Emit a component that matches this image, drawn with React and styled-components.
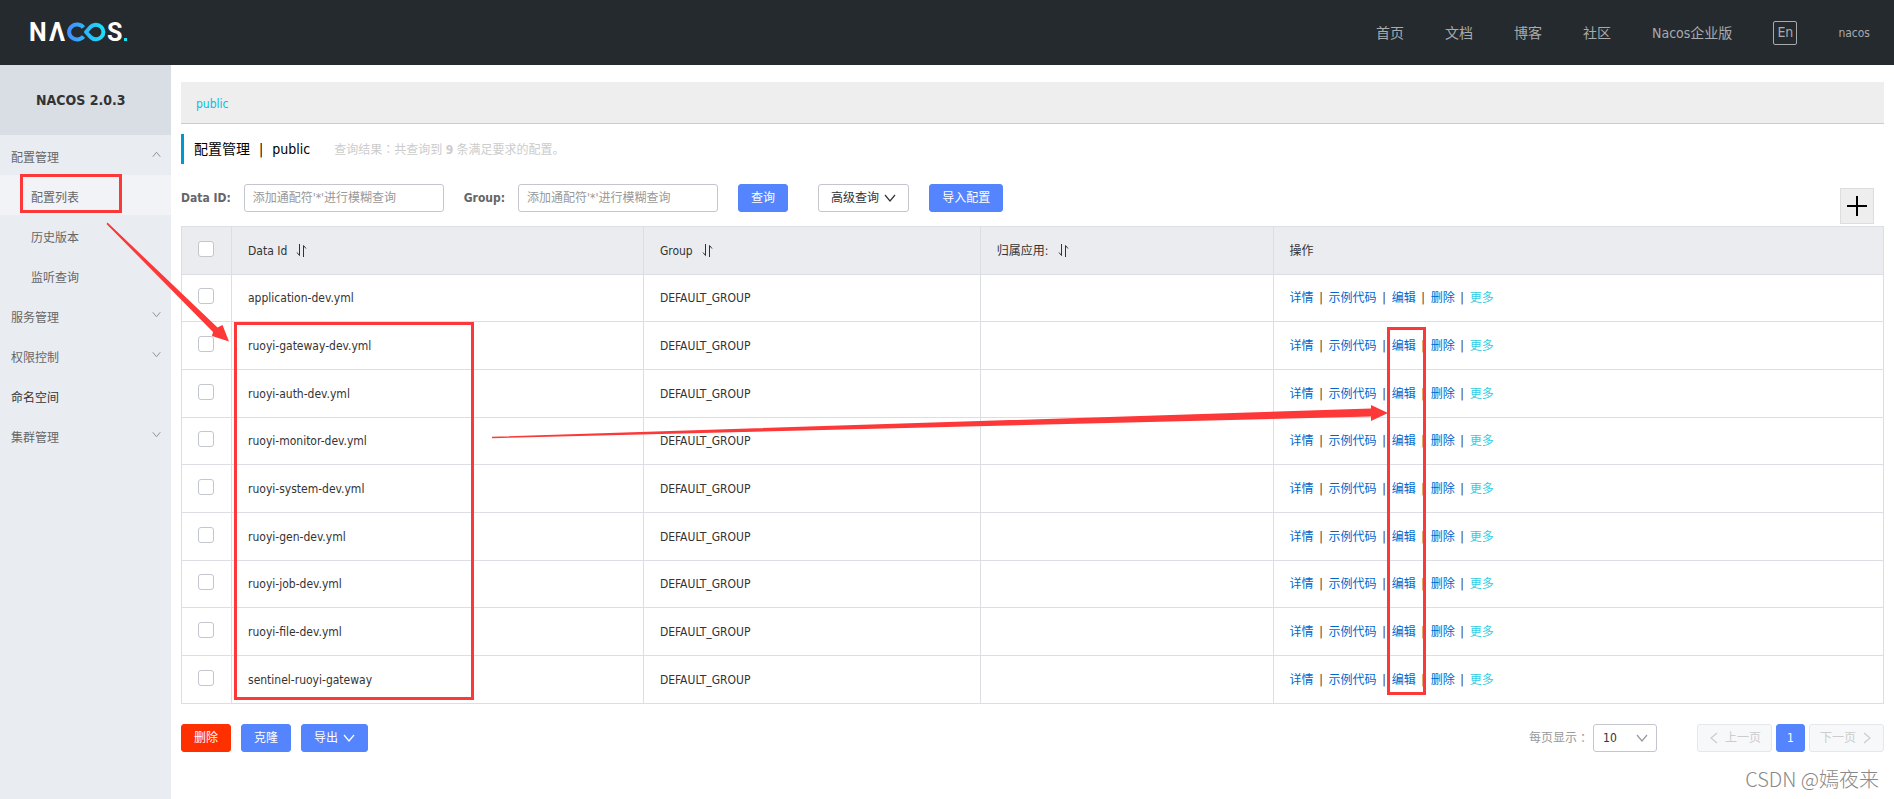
import React from "react";
import styled, { createGlobalStyle, css } from "styled-components";

const GlobalStyle = createGlobalStyle`
  *, *::before, *::after { box-sizing: border-box; }
  body {
    margin: 0;
    background: #fff;
    color: #333;
    font: 12px/18px "DejaVu Sans Condensed", "Noto Sans CJK SC", sans-serif;
  }
  button, input, select { font: inherit; color: inherit; margin: 0; }
  a { text-decoration: none; }
`;

const Page = styled.div`
  position: relative;
  display: flex;
  flex-direction: column;
  min-height: 100vh;
`;

const TopBar = styled.header`
  display: flex;
  align-items: center;
  justify-content: space-between;
  height: 65px;
  padding: 0 24px 0 20px;
  background: #252a2f;
`;

const Nav = styled.nav`
  display: flex;
  align-items: center;
  gap: 41px;
`;

const NavLink = styled.a`
  color: #a8aaac;
  font-size: 14px;
  line-height: 20px;
`;

const UserLink = styled(NavLink)`
  font-size: 12px;
`;

const LangButton = styled.button`
  width: 24px;
  height: 24px;
  padding: 0 0 2px;
  border: 1px solid #a8aaac;
  border-radius: 2px;
  background: none;
  color: #a8aaac;
  font-size: 14px;
  line-height: 20px;
`;

const Body = styled.div`
  display: flex;
  flex: 1;
`;

const Sidebar = styled.aside`
  flex: none;
  width: 171px;
  background: #e9edf2;
`;

const Version = styled.h1`
  margin: 0;
  padding: 0 36px;
  background: #d9dde4;
  font-size: 14px;
  line-height: 70px;
  white-space: nowrap;
`;

const Menu = styled.ul`
  margin: 0;
  padding: 0;
  list-style: none;
`;

const MenuLink = styled.a`
  display: flex;
  align-items: center;
  justify-content: space-between;
  height: 40px;
  padding: 5px 10px 0 ${(p) => (p.$level === 2 ? 31 : 11)}px;
  background: ${(p) => (p.$active ? "#f1f3f7" : "transparent")};
  color: ${(p) => (p.$dark ? "#333" : "#666")};

  svg { margin-bottom: 6px; color: #888; }
`;

const Main = styled.main`
  flex: 1;
  min-width: 0;
  padding: 17px 10px 40px;
`;

const NamespaceBar = styled.div`
  height: 42px;
  padding: 2px 15px 0;
  border-bottom: 1px solid #ccc;
  background: #eee;
  line-height: 40px;

  a { color: #00c1de; }
`;

const TitleRow = styled.div`
  display: flex;
  align-items: center;
  gap: 24px;
  height: 30px;
  margin: 10px 0 20px;
  padding-left: 10px;
  border-left: 3px solid #09c;
`;

const Title = styled.h2`
  display: flex;
  gap: 9px;
  margin: 0;
  color: #000;
  font-size: 14px;
  font-weight: 400;
  line-height: 20px;
`;

const Summary = styled.p`
  margin: 0;
  color: #ccc;
`;

const Colon = styled.span`
  font-family: "Noto Sans CJK TC", sans-serif;
`;

const SearchForm = styled.form`
  display: flex;
  align-items: flex-start;
  margin-bottom: 2px;
`;

const Field = styled.label`
  display: flex;
  align-items: center;
  gap: 13px;
  margin-right: 20px;
  color: #666;
  font-weight: 700;
  white-space: nowrap;
`;

const TextInput = styled.input`
  width: 200px;
  height: 28px;
  padding: 0 8px;
  border: 1px solid #c4c6cf;
  border-radius: 3px;
  background: #fff;
  font-weight: 400;

  &::placeholder { color: #999; opacity: 1; }
`;

const variants = {
  primary: css`border-color: #5584ff; background: #5584ff; color: #fff;`,
  danger: css`border-color: #ff3000; background: #ff3000; color: #fff;`,
  normal: css`border-color: #c4c6cf; background: #fff; color: #333;`,
  disabled: css`border-color: #e6e7eb; background: #f7f8fa; color: #ccc;`,
};

const Button = styled.button`
  display: inline-flex;
  align-items: center;
  justify-content: center;
  gap: 5px;
  height: 28px;
  padding: 0 12px;
  border: 1px solid;
  border-radius: 3px;
  white-space: nowrap;
  ${(p) => variants[p.$variant]}
`;

const FormButtons = styled.div`
  display: flex;
  gap: 20px;

  ${Button}:first-child { margin-right: 10px; }
`;

const AddButton = styled.button`
  display: flex;
  align-items: center;
  justify-content: center;
  width: 34px;
  height: 36px;
  margin: 4px 10px 0 auto;
  padding: 0;
  border: 1px solid #ddd;
  background: #eee;
  color: #000;
`;

const Table = styled.table`
  width: 100%;
  border: 1px solid #dcdee3;
  border-collapse: collapse;
  table-layout: fixed;
`;

const Column = styled.col`
  width: ${(p) => p.$width};
`;

const cell = css`
  padding: 0 16px;
  border: 1px solid #dcdee3;
  font-weight: 400;
  text-align: left;
`;

const HeadCell = styled.th`
  ${cell}
  height: 48px;
  background: #ebecf0;
`;

const Cell = styled.td`
  ${cell}
`;

const Row = styled.tr`
  height: 48px;

  &:nth-child(3n + 1) { height: 47px; }
`;

const Sortable = styled.span`
  display: flex;
  align-items: center;
  gap: 9px;
`;

const Checkbox = styled.input`
  display: block;
  appearance: none;
  width: 16px;
  height: 16px;
  margin: 0 0 4px;
  border: 1px solid #c4c6cf;
  border-radius: 3px;
  background: #fff;
`;

const Actions = styled.div`
  display: flex;
  white-space: nowrap;
`;

const ActionLink = styled.a`
  color: ${(p) => (p.$more ? "#33cde5" : "#06c")};
`;

const Divider = styled.span`
  width: 15px;
  text-align: center;
`;

const Footer = styled.div`
  display: flex;
  align-items: center;
  justify-content: space-between;
  margin-top: 20px;
`;

const ButtonRow = styled.div`
  display: flex;
  gap: 10px;
`;

const Pagination = styled.div`
  display: flex;
  align-items: center;
`;

const PageSize = styled.label`
  display: flex;
  align-items: center;
  margin-right: 40px;
  color: #999;
`;

const SelectWrap = styled.span`
  display: grid;
  align-items: center;
  margin-left: 4px;
  color: #999;

  > * { grid-area: 1 / 1; }
  > svg { justify-self: end; margin-right: 9px; pointer-events: none; }
`;

const Select = styled.select`
  appearance: none;
  width: 64px;
  height: 28px;
  padding: 0 9px;
  border: 1px solid #c4c6cf;
  border-radius: 3px;
  background: #fff;
  color: #333;
`;

const Pager = styled.nav`
  display: flex;
  gap: 4px;

  ${Button} { padding: 0 10px; }
`;

const Watermark = styled.span`
  position: absolute;
  right: 15px;
  bottom: 7px;
  color: #888;
  font: 300 20px/26px "Noto Sans CJK SC", sans-serif;
`;

const Markup = styled.svg`
  position: absolute;
  top: 0;
  left: 0;
  width: 100%;
  height: 100%;
  pointer-events: none;
`;

const Logo = () => (
  <svg width="118" height="50" viewBox="20 7 118 50" role="img" aria-label="NACOS">
    <defs>
      <linearGradient id="loop" gradientUnits="userSpaceOnUse" x1="67" y1="0" x2="107" y2="0">
        <stop offset="0" stopColor="#438cff" />
        <stop offset="1" stopColor="#18e6f8" />
      </linearGradient>
    </defs>
    <g fill="#fff" fontFamily="Roboto" fontSize="25" fontWeight="700">
      <text x="29" y="40">N</text>
      <text x="49" y="40">Λ</text>
      <text x="107" y="40">S</text>
    </g>
    <g fill="none" stroke="url(#loop)" strokeWidth="4">
      <path d="M83.500 26.500 A8 7.500 0 1 0 83.500 35.500" />
      <path d="M86 31 L90.500 26 A7.500 7.200 0 1 1 90.500 36 Z" strokeLinejoin="round" />
    </g>
    <rect x="124" y="37" width="3" height="3" fill="#18e6f8" />
  </svg>
);

const Chevron = ({ dir = "down", width = 12 }) => {
  const d = {
    down: "M1 3 L6 9 L11 3",
    up: "M1 9 L6 3 L11 9",
    left: "M9 1 L3 6 L9 11",
    right: "M3 1 L9 6 L3 11",
  }[dir];
  return (
    <svg width={width} height={width} viewBox="0 0 12 12" fill="none" stroke="currentColor" strokeWidth="1.200" aria-hidden="true">
      <path d={d} />
    </svg>
  );
};

const SortIcon = () => (
  <svg width="11" height="13" viewBox="0 0 11 13" fill="none" stroke="#333" strokeWidth="1" aria-hidden="true">
    <path d="M3.500 0 V11.500 L1 8.500 M7.500 13 V1.500 L10 4.500" />
  </svg>
);

const menu = [
  { text: "配置管理", dir: "up" },
  { text: "配置列表", level: 2, active: true },
  { text: "历史版本", level: 2 },
  { text: "监听查询", level: 2 },
  { text: "服务管理", dir: "down" },
  { text: "权限控制", dir: "down" },
  { text: "命名空间", dark: true },
  { text: "集群管理", dir: "down" },
];

const configs = [
  "application-dev.yml",
  "ruoyi-gateway-dev.yml",
  "ruoyi-auth-dev.yml",
  "ruoyi-monitor-dev.yml",
  "ruoyi-system-dev.yml",
  "ruoyi-gen-dev.yml",
  "ruoyi-job-dev.yml",
  "ruoyi-file-dev.yml",
  "sentinel-ruoyi-gateway",
];

const actions = ["详情", "示例代码", "编辑", "删除", "更多"];

export default function App() {
  return (
    <Page>
      <GlobalStyle />
      <TopBar>
        <Logo />
        <Nav>
          {["首页", "文档", "博客", "社区", "Nacos企业版"].map((t) => (
            <NavLink key={t} href="#">{t}</NavLink>
          ))}
          <LangButton type="button">En</LangButton>
          <UserLink href="#">nacos</UserLink>
        </Nav>
      </TopBar>

      <Body>
        <Sidebar>
          <Version>NACOS 2.0.3</Version>
          <Menu>
            {menu.map((m) => (
              <li key={m.text}>
                <MenuLink href="#" $level={m.level} $active={m.active} $dark={m.dark}>
                  {m.text}
                  {m.dir && <Chevron dir={m.dir} width={9} />}
                </MenuLink>
              </li>
            ))}
          </Menu>
        </Sidebar>

        <Main>
          <NamespaceBar><a href="#">public</a></NamespaceBar>
          <TitleRow>
            <Title>
              <span>配置管理</span><span>|</span><span>public</span>
            </Title>
            <Summary>查询结果<Colon>：</Colon>共查询到 <b>9</b> 条满足要求的配置。</Summary>
          </TitleRow>

          <SearchForm>
            <Field>Data ID:<TextInput type="text" placeholder="添加通配符'*'进行模糊查询" /></Field>
            <Field>Group:<TextInput type="text" placeholder="添加通配符'*'进行模糊查询" /></Field>
            <FormButtons>
              <Button type="button" $variant="primary">查询</Button>
              <Button type="button" $variant="normal">高级查询<Chevron /></Button>
              <Button type="button" $variant="primary">导入配置</Button>
            </FormButtons>
            <AddButton type="button" aria-label="新建配置">
              <svg width="20" height="20" stroke="currentColor" strokeWidth="2" aria-hidden="true">
                <path d="M10 0 V20 M0 10 H20" />
              </svg>
            </AddButton>
          </SearchForm>

          <Table>
            <colgroup>
              <Column $width="50px" />
              <Column $width="24.2%" />
              <Column $width="19.8%" />
              <Column $width="17.2%" />
              <Column $width="auto" />
            </colgroup>
            <thead>
              <tr>
                <HeadCell><Checkbox type="checkbox" aria-label="全选" /></HeadCell>
                <HeadCell><Sortable>Data Id<SortIcon /></Sortable></HeadCell>
                <HeadCell><Sortable>Group<SortIcon /></Sortable></HeadCell>
                <HeadCell><Sortable>归属应用:<SortIcon /></Sortable></HeadCell>
                <HeadCell>操作</HeadCell>
              </tr>
            </thead>
            <tbody>
              {configs.map((id) => (
                <Row key={id}>
                  <Cell><Checkbox type="checkbox" aria-label={id} /></Cell>
                  <Cell>{id}</Cell>
                  <Cell>DEFAULT_GROUP</Cell>
                  <Cell />
                  <Cell>
                    <Actions>
                      {actions.map((a, i) => (
                        <React.Fragment key={a}>
                          {i > 0 && <Divider>|</Divider>}
                          <ActionLink href="#" $more={a === "更多"}>{a}</ActionLink>
                        </React.Fragment>
                      ))}
                    </Actions>
                  </Cell>
                </Row>
              ))}
            </tbody>
          </Table>

          <Footer>
            <ButtonRow>
              <Button type="button" $variant="danger">删除</Button>
              <Button type="button" $variant="primary">克隆</Button>
              <Button type="button" $variant="primary">导出<Chevron /></Button>
            </ButtonRow>
            <Pagination>
              <PageSize>
                每页显示<Colon>：</Colon>
                <SelectWrap>
                  <Select defaultValue="10">
                    <option>10</option>
                    <option>20</option>
                    <option>30</option>
                  </Select>
                  <Chevron />
                </SelectWrap>
              </PageSize>
              <Pager>
                <Button type="button" disabled $variant="disabled"><Chevron dir="left" />上一页</Button>
                <Button type="button" $variant="primary">1</Button>
                <Button type="button" disabled $variant="disabled">下一页<Chevron dir="right" /></Button>
              </Pager>
            </Pagination>
          </Footer>
        </Main>
      </Body>

      <Watermark>CSDN @嫣夜来</Watermark>

      <Markup aria-hidden="true">
        <g fill="none" stroke="#fc3838" strokeWidth="3">
          <rect x="21.500" y="175.500" width="99" height="36" />
          <rect x="235.500" y="323.500" width="237" height="375" />
          <rect x="1388.500" y="328.500" width="36" height="365" />
        </g>
        <g fill="#fc3838">
          <path d="M106.500 224 L107.500 222.500 L217.500 327.500 L222.500 325 L229 341.500 L212 336 L213 332 Z" />
          <path d="M492 436.800 L1371 408.500 V405 L1388 413 L1371 421 V416.500 L492 438.200 Z" />
        </g>
      </Markup>
    </Page>
  );
}
